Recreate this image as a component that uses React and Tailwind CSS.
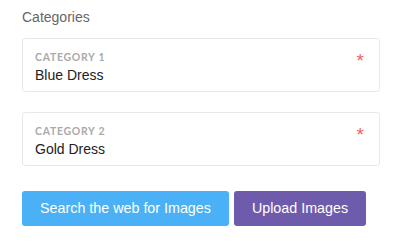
import React from 'react';

const fields = [
  { label: 'Category 1', value: 'Blue Dress' },
  { label: 'Category 2', value: 'Gold Dress' },
];

const App = () => {
  return (
    <div className="w-[395px] h-[251px] bg-white px-[22px] pt-[8px] font-['Liberation_Sans',Arial,sans-serif]">
      <div className="text-[14px] leading-[18px] text-[#666]">Categories</div>

      <div className="mt-[12px] w-[358px] flex flex-col gap-[20px]">
        {fields.map((f) => (
          <div key={f.label} className="relative h-[54px] rounded-[3px] border border-[#e8e8e8] px-[12px] pt-[12px]">
            <div className="font-['Lato',sans-serif] font-bold text-[10.5px] leading-[12px] tracking-[0.7px] uppercase text-[#aaa]">
              {f.label}
            </div>
            <div className="mt-[4px] text-[14px] leading-[17px] text-[#222]">{f.value}</div>
            <span className="absolute right-[15px] top-[12px] text-[19px] leading-[19px] text-[#f06060]">*</span>
          </div>
        ))}
      </div>

      <div className="mt-[25px] flex gap-[5px]">
        <button className="h-[35px] w-[207px] rounded-[3px] bg-[#4ab1f6] text-white text-[14.3px]">
          Search the web for Images
        </button>
        <button className="h-[35px] w-[132px] rounded-[3px] bg-[#6f5bab] text-white text-[14.3px]">
          Upload Images
        </button>
      </div>
    </div>
  );
};

export default App;
